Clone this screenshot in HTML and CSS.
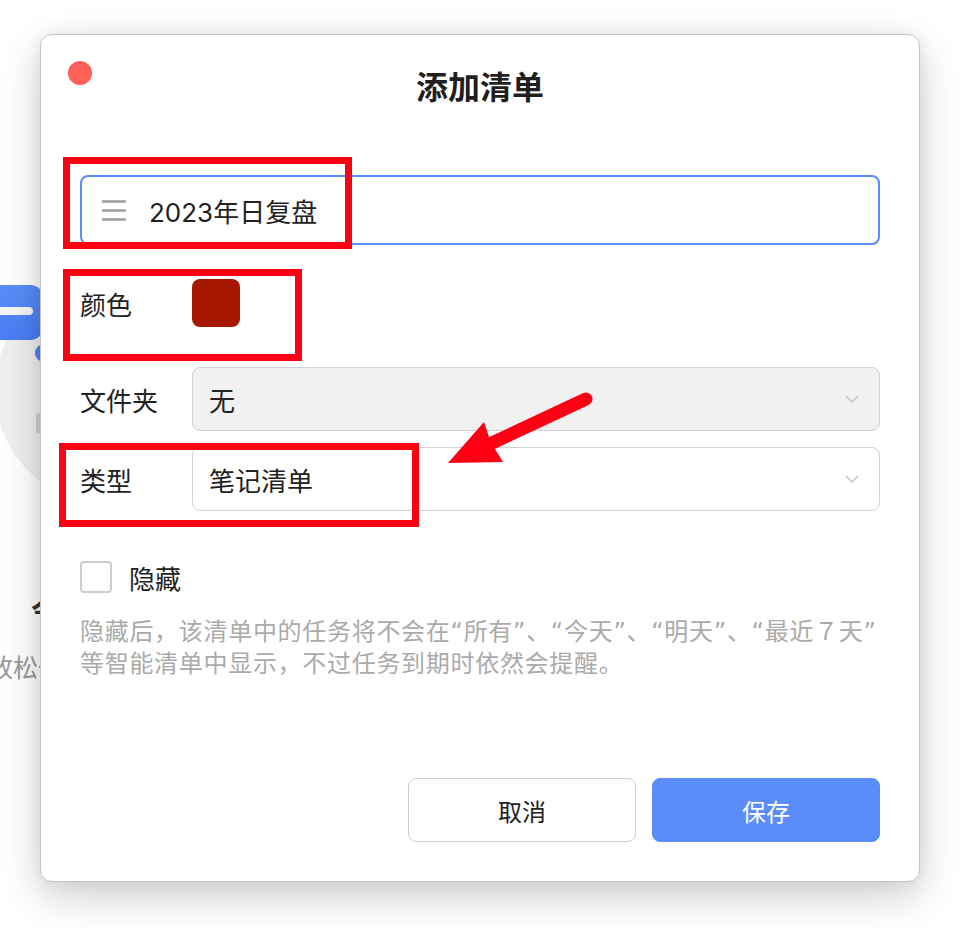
FILE: index.html
```html
<!DOCTYPE html>
<html lang="zh-CN">

<head>
    <meta charset="UTF-8">
    <meta name="viewport" content="width=device-width, initial-scale=1.0">
    <title>添加清单</title>
    <link rel="stylesheet" href="styles.css">
</head>

<body>
    <!-- app page behind the modal, mostly covered -->
    <div class="backdrop">
        <div class="empty-circle"></div>
        <div class="app-logo"><span class="logo-line"></span></div>
        <div class="logo-dot"></div>
        <div class="logo-bar"></div>
        <p class="empty-title">今天</p>
        <p class="empty-tip">放松一下</p>
    </div>

    <div class="dialog">
        <span class="close-dot"></span>
        <h1>添加清单</h1>

        <div class="name-input">
            <svg class="menu-icon" width="24" height="21" viewBox="0 0 24 21">
                <path d="M0 1.5h24M0 10.5h24M0 19.5h24" stroke="#9c9c9c" stroke-width="2.4" fill="none" />
            </svg>
            <span>2023年日复盘</span>
        </div>

        <div class="form-row color-row">
            <label>颜色</label>
            <span class="swatch"></span>
        </div>

        <div class="form-row folder-row">
            <label>文件夹</label>
            <div class="select disabled">
                <span>无</span>
                <svg class="chevron" width="14" height="8" viewBox="0 0 14 8">
                    <polyline points="1,1 7,7 13,1" stroke="#c4c4c4" stroke-width="1.5" fill="none" />
                </svg>
            </div>
        </div>

        <div class="form-row type-row">
            <label>类型</label>
            <div class="select">
                <span>笔记清单</span>
                <svg class="chevron" width="14" height="8" viewBox="0 0 14 8">
                    <polyline points="1,1 7,7 13,1" stroke="#c4c4c4" stroke-width="1.5" fill="none" />
                </svg>
            </div>
        </div>

        <div class="check-row">
            <span class="checkbox"></span>
            <span>隐藏</span>
        </div>

        <p class="hint">隐藏后，该清单中的任务将不会在“所有”、“今天”、“明天”、“最近７天”<br>等智能清单中显示，不过任务到期时依然会提醒。</p>

        <div class="actions">
            <button class="btn">取消</button>
            <button class="btn primary">保存</button>
        </div>
    </div>

    <!-- red markup drawn over the screenshot -->
    <div class="mark mark-name"></div>
    <div class="mark mark-color"></div>
    <div class="mark mark-type"></div>
    <svg class="arrow" width="170" height="100" viewBox="440 380 170 100">
        <line x1="492" y1="443" x2="586" y2="399" stroke="#fe0014" stroke-width="13" stroke-linecap="round" />
        <polygon points="448,463 484,422 489,437 495,449 503,462" fill="#fe0014" />
    </svg>
</body>

</html>
```

FILE: styles.css
```css
body {
    margin: 0;
    padding: 34px 40px 0;
    height: 928px;
    box-sizing: border-box;
    position: relative;
    overflow: hidden;
    background: #fff;
    color: #222;
    font-family: "Inter", "Noto Sans CJK SC", sans-serif;
}

/* page behind the dialog */
.backdrop {
    position: absolute;
    inset: 0;
    z-index: 0;
}

.empty-circle {
    position: absolute;
    left: -5px;
    top: 275px;
    width: 230px;
    height: 230px;
    border-radius: 50%;
    background: #efefef;
}

.app-logo {
    position: absolute;
    left: -40px;
    top: 285px;
    width: 84px;
    height: 55px;
    border-radius: 14px;
    background: linear-gradient(180deg, #5a8ef9, #4a7cf4);
}

.logo-line {
    position: absolute;
    left: 10px;
    top: 22px;
    width: 63px;
    height: 8px;
    border-radius: 4px;
    background: #f4f6fb;
}

.logo-dot {
    position: absolute;
    left: 35px;
    top: 344px;
    width: 18px;
    height: 18px;
    border-radius: 50%;
    background: #4f82f5;
}

.logo-bar {
    position: absolute;
    left: 36px;
    top: 413px;
    width: 12px;
    height: 20px;
    border-radius: 3px;
    background: #cfcfcf;
}

.empty-title {
    position: absolute;
    left: 31px;
    top: 590px;
    margin: 0;
    font-size: 26px;
    font-weight: 700;
    color: #333;
}

.empty-tip {
    position: absolute;
    left: -12px;
    top: 648px;
    margin: 0;
    font-size: 25px;
    color: #9a9a9a;
}

/* dialog */
.dialog {
    position: relative;
    z-index: 1;
    width: 880px;
    height: 848px;
    box-sizing: border-box;
    display: flex;
    flex-direction: column;
    padding: 33px 39px 39px;
    background: #fff;
    border: 1px solid #c4c4c4;
    border-radius: 12px;
    box-shadow: 0 14px 40px rgba(0, 0, 0, 0.2), 0 0 18px rgba(0, 0, 0, 0.06);
}

.close-dot {
    position: absolute;
    left: 27px;
    top: 26px;
    width: 24px;
    height: 24px;
    border-radius: 50%;
    background: #fe5f57;
}

.dialog h1 {
    margin: 0;
    font-size: 32px;
    line-height: 40px;
    font-weight: 700;
    text-align: center;
    color: #1f1f1f;
}

.name-input {
    margin-top: 67px;
    height: 70px;
    box-sizing: border-box;
    display: flex;
    align-items: center;
    gap: 23px;
    padding-left: 20px;
    border: 2px solid #5b8cf7;
    border-radius: 8px;
    font-size: 26px;
}

.form-row {
    display: flex;
    align-items: center;
}

.form-row > label {
    width: 112px;
    flex-shrink: 0;
    font-size: 26px;
}

.color-row {
    margin-top: 34px;
    height: 48px;
}

.swatch {
    width: 48px;
    height: 48px;
    border-radius: 8px;
    background: #a61800;
}

.folder-row {
    margin-top: 40px;
}

.type-row {
    margin-top: 16px;
}

.select {
    flex: 1;
    height: 64px;
    box-sizing: border-box;
    display: flex;
    align-items: center;
    justify-content: space-between;
    padding: 0 20px 0 16px;
    border: 1px solid #d2d2d2;
    border-radius: 8px;
    background: #fff;
    font-size: 26px;
}

.select.disabled {
    background: #f1f1f1;
}

.check-row {
    margin-top: 50px;
    height: 32px;
    display: flex;
    align-items: center;
    gap: 17px;
    font-size: 26px;
}

.checkbox {
    width: 32px;
    height: 32px;
    box-sizing: border-box;
    border: 2px solid #cdcdcd;
    border-radius: 4px;
}

.hint {
    margin: 23px 0 0;
    font-family: "DejaVu Sans", "Noto Sans CJK SC", sans-serif;
    font-size: 24px;
    line-height: 32px;
    letter-spacing: 0.7px;
    color: #aaa;
}

.actions {
    margin-top: auto;
    display: flex;
    justify-content: flex-end;
    gap: 16px;
}

.btn {
    width: 228px;
    height: 64px;
    border: 1px solid #d0d0d0;
    border-radius: 8px;
    background: #fff;
    color: #222;
    font-family: inherit;
    font-size: 24px;
}

.btn.primary {
    background: #5a8cfa;
    border-color: #5a8cfa;
    color: #fff;
}

/* annotation layer */
.mark {
    position: absolute;
    z-index: 2;
    box-sizing: border-box;
    border: 7px solid #fe0014;
}

.mark-name {
    left: 63px;
    top: 157px;
    width: 289px;
    height: 92px;
}

.mark-color {
    left: 63px;
    top: 269px;
    width: 239px;
    height: 92px;
}

.mark-type {
    left: 59px;
    top: 443px;
    width: 360px;
    height: 84px;
}

.arrow {
    position: absolute;
    z-index: 2;
    left: 440px;
    top: 380px;
}
```
